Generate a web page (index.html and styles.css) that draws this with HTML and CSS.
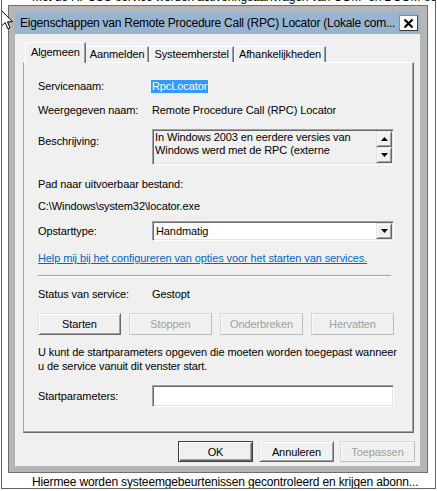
FILE: index.html
```html
<!DOCTYPE html>
<html lang="nl">
<head>
<meta charset="utf-8">
<title>Eigenschappen van Remote Procedure Call (RPC) Locator</title>
<link rel="stylesheet" href="styles.css">
</head>
<body>
<div class="desk">
	<p class="desk-line first">Met de RPCSS-service worden activeringsaanvragen van COM- en DCOM-servers verwerkt.</p>
	<p class="desk-line last">Hiermee worden systeemgebeurtenissen gecontroleerd en krijgen abonn...</p>

	<div class="dialog">
		<div class="titlebar">
			<span class="title">Eigenschappen van Remote Procedure Call (RPC) Locator (Lokale com...</span>
			<span class="close"><svg width="11" height="11" viewBox="0 0 11 11"><path d="M1.5 1.5 L9.5 9.5 M9.5 1.5 L1.5 9.5" stroke="#000" stroke-width="2.2"/></svg></span>
		</div>

		<div class="dialog-body">
			<div class="tabs">
				<span class="tab active">Algemeen</span>
				<span class="tab">Aanmelden</span>
				<span class="tab">Systeemherstel</span>
				<span class="tab">Afhankelijkheden</span>
			</div>

			<div class="panel">
				<div class="row r-name">
					<label>Servicenaam:</label>
					<span class="selected-text">RpcLocator</span>
				</div>
				<div class="row r-display">
					<label>Weergegeven naam:</label>
					<span>Remote Procedure Call (RPC) Locator</span>
				</div>
				<div class="row r-desc">
					<label>Beschrijving:</label>
					<div class="memo sunken">
						<div class="memo-text">In Windows 2003 en eerdere versies van<br>Windows werd met de RPC (externe</div>
						<div class="scroll">
							<span class="btn-3d arrow"><svg width="7" height="4" viewBox="0 0 7 4"><polygon points="3.5,0 7,4 0,4" fill="#000"/></svg></span>
							<span class="btn-3d arrow"><svg width="7" height="4" viewBox="0 0 7 4"><polygon points="0,0 7,0 3.5,4" fill="#000"/></svg></span>
						</div>
					</div>
				</div>
				<div class="row r-path-label">Pad naar uitvoerbaar bestand:</div>
				<div class="row r-path">C:\Windows\system32\locator.exe</div>
				<div class="row r-start">
					<label>Opstarttype:</label>
					<div class="combo sunken">
						<span class="combo-value">Handmatig</span>
						<span class="btn-3d arrow drop"><svg width="7" height="4" viewBox="0 0 7 4"><polygon points="0,0 7,0 3.5,4" fill="#000"/></svg></span>
					</div>
				</div>
				<div class="row r-link"><a href="#">Help mij bij het configureren van opties voor het starten van services.</a></div>
				<div class="separator"></div>
				<div class="row r-status">
					<label>Status van service:</label>
					<span>Gestopt</span>
				</div>
				<div class="row r-buttons">
					<button class="btn-3d btn">Starten</button>
					<button class="btn-3d btn" disabled>Stoppen</button>
					<button class="btn-3d btn" disabled>Onderbreken</button>
					<button class="btn-3d btn" disabled>Hervatten</button>
				</div>
				<p class="row r-note">U kunt de startparameters opgeven die moeten worden toegepast wanneer<br>u de service vanuit dit venster start.</p>
				<div class="row r-params">
					<label>Startparameters:</label>
					<div class="field sunken"></div>
				</div>
			</div>

			<div class="actions">
				<button class="btn-3d btn default">OK</button>
				<button class="btn-3d btn">Annuleren</button>
				<button class="btn-3d btn" disabled>Toepassen</button>
			</div>
		</div>
	</div>

	<svg class="cursor" width="13" height="21" viewBox="0 0 13 21"><path d="M0.5 0.5 L0.5 16 L4.2 12.6 L6.8 18.8 L9 17.8 L6.5 11.8 L11.5 11.8 Z" fill="#fff" stroke="#000" stroke-width="1"/></svg>
</div>
</body>
</html>
```

FILE: styles.css
```css
body { margin: 0; background: #fff; color: #000; }

/* window behind the dialog */
.desk { position: relative; height: 488px; margin: 0 1px; padding-left: 30px; border: 1px solid #646464; border-top: 0; overflow: hidden; display: flex; flex-direction: column; justify-content: space-between; font: 12px/15px "Liberation Sans", Arial, sans-serif; letter-spacing: -0.15px; }
.desk-line { margin: 0; white-space: nowrap; }
.desk-line.first { margin-top: -10px; }
.desk-line.last { margin-bottom: -2px; }
.cursor { position: absolute; left: -1px; top: 10px; }

/* dialog frame */
.dialog { position: absolute; left: 6px; top: 5px; width: 405px; padding: 6px 7px 6px 6px; border: 1px solid #6e6e6e; background: #b6b6b6; font: 11px/14px "Liberation Sans", Arial, sans-serif; letter-spacing: -0.1px; }
.titlebar { height: 22px; display: flex; align-items: center; justify-content: space-between; padding-left: 5px; background: #99b4d1; }
.title { font: 12px/16px "Liberation Sans", Arial, sans-serif; letter-spacing: -0.25px; white-space: nowrap; }
.close { width: 17px; height: 14px; margin-right: 2px; display: flex; align-items: center; justify-content: center; background: #fff; border: 1px solid; border-color: #8a8a8a #3c3c3c #3c3c3c #8a8a8a; }

.dialog-body { padding: 8px 5px 4px 8px; background: #f0f0f0; }

/* tabs */
.tabs { height: 20px; display: flex; align-items: flex-end; padding-left: 2px; }
.tab { height: 15px; padding: 0 4px; line-height: 15px; background: #f0f0f0; border: 1px solid; border-bottom: 0; border-color: #fff #696969 #fff #fff; box-shadow: inset -1px 0 #a0a0a0; white-space: nowrap; }
.tab.active { position: relative; z-index: 1; height: 20px; margin-bottom: -1px; padding: 0 5px; line-height: 19px; }
.tab.active + .tab { border-left: 0; }

.panel { margin-right: 1px; padding: 16px 19px 25px 14px; border: 1px solid; border-color: #fff #696969 #696969 #a0a0a0; box-shadow: inset -1px -1px #a0a0a0; }

/* form rows */
.row { display: flex; align-items: center; height: 14px; margin: 0; white-space: nowrap; }
.row label { width: 114px; flex: none; }
.r-display { margin-top: 10px; }
.r-desc { height: 36px; margin-top: 12px; align-items: flex-start; }
.r-desc label { padding-top: 5px; }
.r-path-label { margin-top: 12px; }
.r-path { margin-top: 8px; }
.r-start { height: 20px; margin-top: 8px; }
.r-link { margin-top: 10px; }
.r-link a { color: #0066cc; text-decoration: underline; }
.separator { width: 353px; margin-top: 10px; border-top: 1px solid #a0a0a0; border-bottom: 1px solid #fff; }
.r-status { margin-top: 10px; }
.r-buttons { height: 22px; margin-top: 12px; justify-content: space-between; }
.r-note { display: block; height: 28px; margin-top: 10px; }
.r-params { height: 22px; margin-top: 12px; }

.selected-text { margin-left: -1px; padding: 0 1px; line-height: 13px; color: #fff; background: #3399ff; }

/* sunken edit boxes */
.sunken { box-sizing: border-box; width: 242px; border: 1px solid; border-color: #a0a0a0 #fff #fff #a0a0a0; box-shadow: inset 1px 1px #696969, inset -1px -1px #e3e3e3; }
.memo { height: 36px; display: flex; justify-content: space-between; padding: 1px 1px 1px 2px; background: #f0f0f0; }
.memo-text { line-height: 13px; }
.scroll { display: flex; flex-direction: column; }
.combo { height: 20px; display: flex; align-items: center; justify-content: space-between; padding: 1px 1px 1px 3px; background: #fff; }
.field { height: 22px; background: #fff; }

/* 3d buttons */
.btn-3d { box-sizing: border-box; display: flex; align-items: center; justify-content: center; padding: 0; background: #f0f0f0; border: 1px solid; border-color: #e3e3e3 #696969 #696969 #e3e3e3; box-shadow: inset 1px 1px #fff, inset -1px -1px #a0a0a0; }
.arrow { width: 16px; height: 17px; }
.arrow.drop { height: 16px; }
.btn { width: 83px; height: 22px; font: inherit; letter-spacing: inherit; color: #000; }
.btn:disabled { color: #a0a0a0; border-color: #d6d6d6 #bcbcbc #bcbcbc #d6d6d6; box-shadow: inset 1px 1px #fafafa; }

.actions { display: flex; justify-content: flex-end; gap: 6px; margin-top: 8px; }
.actions .btn { width: 75px; height: 21px; }
.actions .default { border-color: #3c3c3c; box-shadow: inset 1px 1px #fff, inset -1px -1px #696969, inset -2px -2px #a0a0a0; }
```
